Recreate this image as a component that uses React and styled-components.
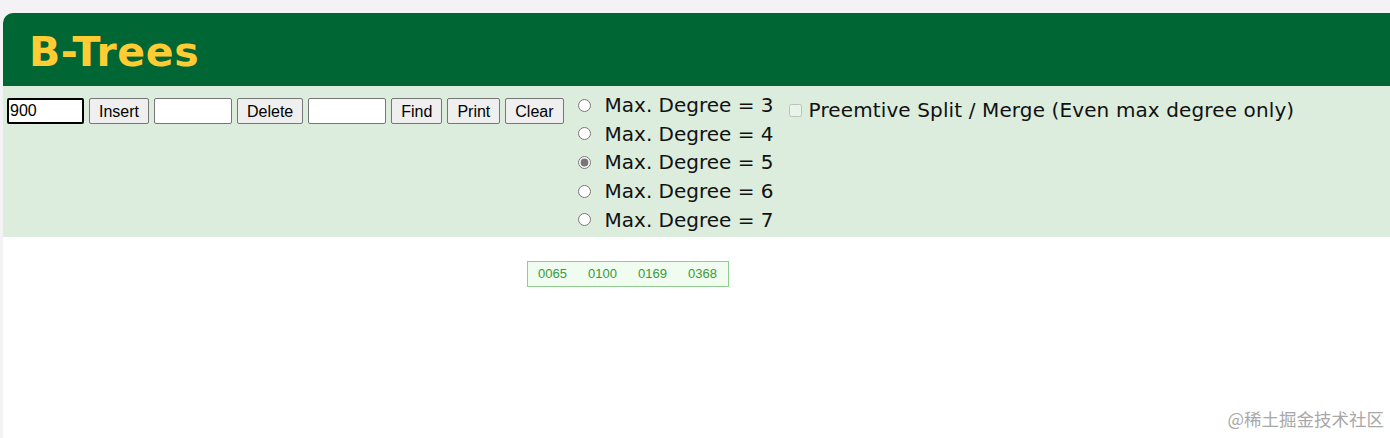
import React, { useState } from 'react';
import styled, { createGlobalStyle } from 'styled-components';

const GlobalStyle = createGlobalStyle`
  html, body {
    margin: 0;
    padding: 0;
    background: #f3f3f5;
    height: 100%;
  }
  #root {
    height: 100%;
  }
`;

const Page = styled.div`
  display: flex;
  flex-direction: column;
  height: calc(100% - 13px);
  margin: 13px 0 0 3px;
  background: #ffffff;
  border-top-left-radius: 10px;
  overflow: hidden;
`;

const Header = styled.div`
  height: 73px;
  box-sizing: border-box;
  display: flex;
  align-items: center;
  padding: 4px 0 0 26px;
  background: #006633;
`;

const Title = styled.h1`
  margin: 0;
  font-family: "DejaVu Sans", Verdana, sans-serif;
  font-size: 41px;
  font-weight: bold;
  color: #ffcc33;
  letter-spacing: 0.6px;
`;

const Controls = styled.div`
  height: 151px;
  display: flex;
  align-items: flex-start;
  background: #dcedde;
`;

const ActionBar = styled.div`
  display: flex;
  gap: 5px;
  padding: 12px 0 0 4px;
`;

const TextField = styled.input`
  box-sizing: border-box;
  width: ${(p) => p.$width || 78}px;
  height: 26px;
  padding: 0 1px;
  font-family: "Liberation Sans", Arial, sans-serif;
  font-size: 16px;
  color: #000;
  background: #fff;
  border: ${(p) => (p.$focused ? '2px solid #000' : '1px solid #767676')};
  border-radius: 2px;
  outline: none;
`;

const Button = styled.button`
  box-sizing: border-box;
  height: 26px;
  padding: 1px 9px 0;
  font-family: "Liberation Sans", Arial, sans-serif;
  font-size: 16px;
  color: #000;
  background: #efefef;
  border: 1px solid #767676;
  border-radius: 2px;
`;

const DegreeList = styled.div`
  display: flex;
  flex-direction: column;
  padding: 5px 0 0 10px;
`;

const OptionRow = styled.label`
  display: flex;
  align-items: center;
  height: 28.6px;
  font-family: "DejaVu Sans", Verdana, sans-serif;
  font-size: 20px;
  color: #111;
`;

const Radio = styled.input`
  width: 13px;
  height: 13px;
  margin: 0 14px 0 4px;
  accent-color: #777;
`;

const SplitOption = styled.label`
  display: flex;
  align-items: center;
  height: 28.6px;
  margin: 10px 0 0 13px;
  font-family: "DejaVu Sans", Verdana, sans-serif;
  font-size: 20px;
  letter-spacing: 0.12px;
  color: #111;
`;

const Check = styled.input`
  width: 13px;
  height: 13px;
  margin: 0 7px 0 2px;
  opacity: 0.35;
`;

const Canvas = styled.div`
  position: relative;
  flex: 1;
  background: #ffffff;
`;

const Node = styled.div`
  position: absolute;
  box-sizing: border-box;
  display: flex;
  height: 26px;
  padding-left: 10px;
  background: #effcef;
  border: 1px solid #8fce8f;
`;

const Key = styled.span`
  flex: none;
  width: 50px;
  line-height: 24px;
  font-family: "Liberation Sans", Arial, sans-serif;
  font-size: 13px;
  color: #3a9a3a;
`;

const Watermark = styled.div`
  position: absolute;
  right: 6px;
  bottom: 7px;
  font-family: "Noto Sans CJK SC", sans-serif;
  font-size: 17.5px;
  color: #a8a8a8;
`;

const degrees = [3, 4, 5, 6, 7];
const keys = ['0065', '0100', '0169', '0368'];

const App = () => {
  const [degree, setDegree] = useState(5);

  return (
    <>
      <GlobalStyle />
      <Page>
        <Header>
          <Title>B-Trees</Title>
        </Header>
        <Controls>
          <ActionBar>
            <TextField $focused $width={77} defaultValue="900" />
            <Button>Insert</Button>
            <TextField />
            <Button>Delete</Button>
            <TextField />
            <Button>Find</Button>
            <Button>Print</Button>
            <Button>Clear</Button>
          </ActionBar>
          <DegreeList>
            {degrees.map((d) => (
              <OptionRow key={d}>
                <Radio
                  type="radio"
                  name="degree"
                  checked={degree === d}
                  onChange={() => setDegree(d)}
                />
                Max. Degree = {d}
              </OptionRow>
            ))}
          </DegreeList>
          <SplitOption>
            <Check type="checkbox" />
            Preemtive Split / Merge (Even max degree only)
          </SplitOption>
        </Controls>
        <Canvas>
          <Node style={{ left: 524, top: 24, width: 202 }}>
            {keys.map((k) => (
              <Key key={k}>{k}</Key>
            ))}
          </Node>
          <Watermark>@稀土掘金技术社区</Watermark>
        </Canvas>
      </Page>
    </>
  );
};

export default App;
